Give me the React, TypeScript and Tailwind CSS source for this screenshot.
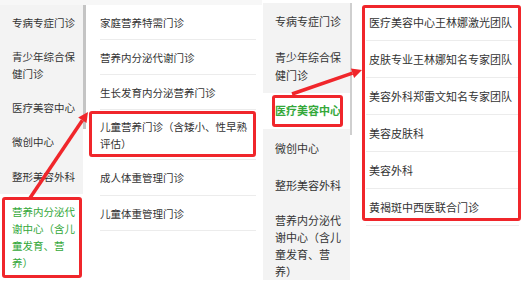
import React from "react"

const RED = "#f0262b"

const leftA = ["专病专症门诊", "青少年综合保健门诊", "医疗美容中心", "微创中心", "整形美容外科"]
const leftAHeights = ["h-[35px]", "h-[50px]", "h-[34px]", "h-[35px]", "h-[35px]"]
const listA = [
  { text: "家庭营养特需门诊", h: "h-[35px]" },
  { text: "营养内分泌代谢门诊", h: "h-[35px]" },
  { text: "生长发育内分泌营养门诊", h: "h-[35px]" },
  { text: "儿童营养门诊（含矮小、性早熟评估）", h: "h-[50px]" },
  { text: "成人体重管理门诊", h: "h-[36px]" },
  { text: "儿童体重管理门诊", h: "h-[35px]" },
]

const leftB = [
  { text: "专病专症门诊", h: "h-[38px]" },
  { text: "青少年综合保健门诊", h: "h-[52px]" },
  { text: "医疗美容中心", h: "h-[36px]", active: true },
  { text: "微创中心", h: "h-[40px]" },
  { text: "整形美容外科", h: "h-[34px]" },
]
const listB = [
  "医疗美容中心王林娜激光团队",
  "皮肤专业王林娜知名专家团队",
  "美容外科郑雷文知名专家团队",
  "美容皮肤科",
  "美容外科",
  "黄褐斑中西医联合门诊",
]

const RedBox = ({ className }: { className: string }) => (
  <div className={`pointer-events-none absolute rounded-[3px] border-[3px] border-[#f0262b] ${className}`} />
)

export default function App() {
  return (
    <div
      className="relative flex h-[286px] w-[527px] overflow-hidden bg-white text-[#333]"
      style={{ fontFamily: '"Noto Sans CJK SC", "Noto Sans", sans-serif' }}
    >
      {/* panel A */}
      <div className="flex w-[262px] flex-col">
        <div className="h-[5px] bg-[#f7f7f7]" />
        <div className="flex text-[10.5px] leading-[17px]">
          <div className="flex h-[275px] w-[83px] flex-col bg-[#f3f3f3]">
            {leftA.map((t, i) => (
              <div key={t} className={`flex items-center pl-[12px] ${leftAHeights[i]}`}>
                <span className="w-[64px]">{t}</span>
              </div>
            ))}
            <div className="flex-1 bg-white pl-[12px] pt-[8.5px] text-[#34a83a]">
              <span className="block w-[64px]">营养内分泌代谢中心（含儿童发育、营养）</span>
            </div>
          </div>
          <div className="w-[3px]">
            <div className="h-[124px] bg-[#c4c4c4]" />
          </div>
          <div className="ml-[14px] w-[156px]">
            {listA.map((it) => (
              <div key={it.text} className={`flex items-center border-b border-[#ececec] ${it.h}`}>
                <span className="w-[150px]">{it.text}</span>
              </div>
            ))}
          </div>
        </div>
      </div>

      {/* panel B */}
      <div className="ml-[1px] flex flex-1 pt-[3px] text-[11px]">
        <div className="flex h-[277px] w-[87px] flex-col overflow-hidden bg-[#f3f3f3]">
          {leftB.map((it) => (
            <div
              key={it.text}
              className={`flex shrink-0 items-center pl-[12px] leading-[17.7px] ${it.h} ${
                it.active ? "bg-white font-semibold text-[#34a83a]" : ""
              }`}
            >
              <span className="w-[67px]">{it.text}</span>
            </div>
          ))}
          <div className="shrink-0 pl-[12px] pt-[9px] leading-[17px]">
            <span className="block w-[67px]">营养内分泌代谢中心（含儿童发育、营养）</span>
          </div>
        </div>
        <div className="w-[2px]">
          <div className="h-[132px] bg-[#cfcfcf]" />
        </div>
        <div className="ml-[14px] mt-[1px] w-[153px]">
          {listB.map((t) => (
            <div key={t} className="flex h-[37px] items-center border-b border-[#ececec] pl-[3px]">
              {t}
            </div>
          ))}
        </div>
      </div>

      {/* annotations */}
      <RedBox className="left-[2px] top-[197px] h-[81px] w-[80px]" />
      <RedBox className="left-[89px] top-[111px] h-[46px] w-[167px]" />
      <RedBox className="left-[272px] top-[95px] h-[32px] w-[71px]" />
      <RedBox className="left-[362px] top-[5px] h-[216px] w-[159px]" />
      <svg className="pointer-events-none absolute left-0 top-0" width="527" height="286" viewBox="0 0 527 286">
        <line x1="30" y1="198" x2="82.4" y2="120.3" stroke={RED} strokeWidth="3.5" />
        <polygon points="88,112 86.5,123.1 78.2,117.4" fill={RED} />
        <line x1="292" y1="94" x2="352.5" y2="73.1" stroke={RED} strokeWidth="3.5" />
        <polygon points="362,70 354.1,77.9 350.9,68.4" fill={RED} />
      </svg>
    </div>
  )
}
